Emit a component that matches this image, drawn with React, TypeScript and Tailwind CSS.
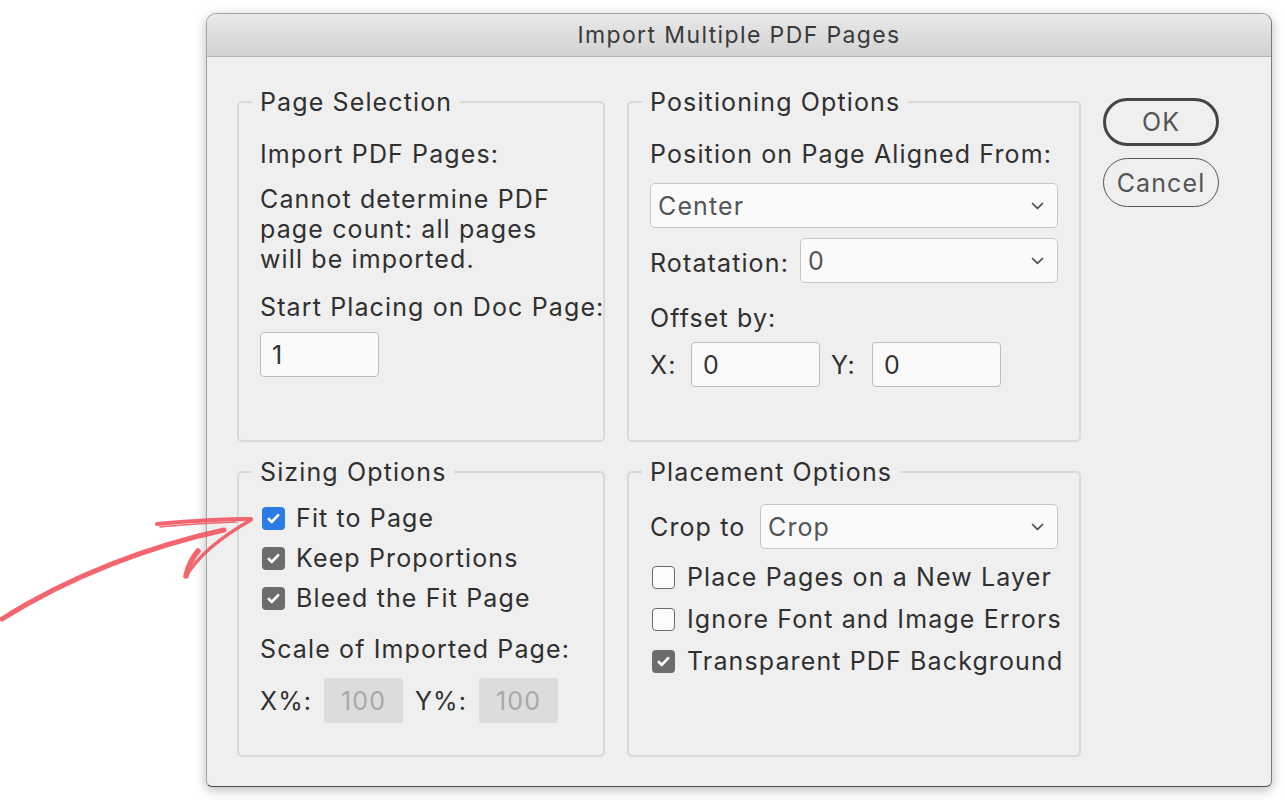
import React from "react";

function Check({ color }: { color: string }) {
  return (
    <span className={`w-[23px] h-[23px] rounded-[4px] flex items-center justify-center shrink-0 ${color}`}>
      <svg width="15" height="15" viewBox="0 0 16 16">
        <path d="M3 8.5l3.2 3.2L13 4.5" fill="none" stroke="white" strokeWidth="2.8" strokeLinecap="round" strokeLinejoin="round" />
      </svg>
    </span>
  );
}

function Empty() {
  return <span className="w-[23px] h-[23px] rounded-[4px] border-[1.5px] border-[#6b6b6b] bg-[#fbfbfb] shrink-0" />;
}

function Chevron() {
  return (
    <svg width="13" height="8" viewBox="0 0 13 8" className="shrink-0">
      <path d="M1.5 1.5L6.5 6.3l5-4.8" fill="none" stroke="#4a4a4a" strokeWidth="1.7" strokeLinecap="round" strokeLinejoin="round" />
    </svg>
  );
}

function Select({ value, cls }: { value: string; cls: string }) {
  return (
    <div className={`flex items-center justify-between h-[45px] bg-[#fafafa] border-[1.5px] border-[#c6c6c6] rounded-[5px] pl-[7px] pr-[13px] text-[#555] ${cls}`}>
      <span>{value}</span>
      <Chevron />
    </div>
  );
}

function Input({ value, cls }: { value: string; cls: string }) {
  return (
    <div className={`flex items-center h-[45px] bg-[#fafafa] border-[1.5px] border-[#bdbdbd] rounded-[4px] pl-[11px] text-[#333] ${cls}`}>
      {value}
    </div>
  );
}

function Disabled({ value }: { value: string }) {
  return (
    <div className="flex items-center justify-center h-[45px] w-[79px] bg-[#dcdcdc] rounded-[3px] text-[#a9a9a9]">
      {value}
    </div>
  );
}

export default function App() {
  return (
    <div className="relative w-[1285px] h-[800px] bg-white pl-[206px] pt-[13px] font-['Inter',sans-serif] text-[25px] tracking-[0.045em] text-[#303030] leading-[30px]">
      <div className="w-[1066px] h-[774px] bg-[#efefef] rounded-t-[10px] rounded-b-[6px] border border-[#a6a6a6] border-b-[#4f4f4f] border-r-[#7a7a7a] shadow-[0_3px_12px_rgba(0,0,0,0.28)] flex flex-col overflow-hidden">
        <div className="h-[43px] shrink-0 bg-gradient-to-b from-[#e9e9e9] to-[#d2d2d2] border-b border-[#b4b4b4] flex items-center justify-center text-[23px] text-[#3a3a3a] tracking-[0.06em]">
          Import Multiple PDF Pages
        </div>
        <div className="flex pl-[30px] pt-[30px]">
          <div className="grid grid-cols-[368px_454px] gap-x-[22px] gap-y-[15px]">
            <fieldset className="min-w-0 w-[368px] h-[355px] border-2 border-[#d9d9d9] rounded-[5px] px-[21px]">
              <legend className="px-2 -ml-2 leading-[30px]">Page Selection</legend>
              <div className="pt-[22px]">Import PDF Pages:</div>
              <div className="mt-[15px]">
                Cannot determine PDF
                <br />
                page count: all pages
                <br />
                will be imported.
              </div>
              <div className="mt-[18px] whitespace-nowrap">Start Placing on Doc Page:</div>
              <Input value="1" cls="mt-[10px] w-[119px]" />
            </fieldset>

            <fieldset className="min-w-0 w-[454px] h-[355px] border-2 border-[#d9d9d9] rounded-[5px] px-[21px]">
              <legend className="px-2 -ml-2 leading-[30px]">Positioning Options</legend>
              <div className="pt-[22px] whitespace-nowrap">Position on Page Aligned From:</div>
              <Select value="Center" cls="mt-[14px] w-full" />
              <div className="mt-[10px] flex items-center justify-between">
                <span className="pt-[4px]">Rotatation:</span>
                <Select value="0" cls="w-[258px]" />
              </div>
              <div className="mt-[20px]">Offset by:</div>
              <div className="mt-[9px] flex items-center">
                <span className="w-[41px]">X:</span>
                <Input value="0" cls="w-[129px]" />
                <span className="ml-[11px] w-[41px]">Y:</span>
                <Input value="0" cls="w-[129px]" />
              </div>
            </fieldset>

            <fieldset className="min-w-0 w-[368px] h-[300px] border-2 border-[#d9d9d9] rounded-[5px] px-[21px]">
              <legend className="px-2 -ml-2 leading-[30px]">Sizing Options</legend>
              <div className="pt-[11px] flex flex-col">
                <div className="h-[40px] flex items-center gap-[11px] pl-[2px]">
                  <Check color="bg-[#2a7be4]" />
                  <span>Fit to Page</span>
                </div>
                <div className="h-[40px] flex items-center gap-[11px] pl-[2px]">
                  <Check color="bg-[#6c6c6c]" />
                  <span>Keep Proportions</span>
                </div>
                <div className="h-[40px] flex items-center gap-[11px] pl-[2px]">
                  <Check color="bg-[#6c6c6c]" />
                  <span>Bleed the Fit Page</span>
                </div>
              </div>
              <div className="mt-[16px] whitespace-nowrap">Scale of Imported Page:</div>
              <div className="mt-[14px] flex items-center">
                <span className="w-[64px]">X%:</span>
                <Disabled value="100" />
                <span className="ml-[12px] w-[64px]">Y%:</span>
                <Disabled value="100" />
              </div>
            </fieldset>

            <fieldset className="min-w-0 w-[454px] h-[300px] border-2 border-[#d9d9d9] rounded-[5px] px-[21px]">
              <legend className="px-2 -ml-2 leading-[30px]">Placement Options</legend>
              <div className="pt-[17px] flex items-center justify-between">
                <span>Crop to</span>
                <Select value="Crop" cls="w-[298px]" />
              </div>
              <div className="mt-[7px] flex flex-col">
                <div className="h-[42px] flex items-center gap-[12px] pl-[2px]">
                  <Empty />
                  <span className="whitespace-nowrap">Place Pages on a New Layer</span>
                </div>
                <div className="h-[42px] flex items-center gap-[12px] pl-[2px]">
                  <Empty />
                  <span className="whitespace-nowrap">Ignore Font and Image Errors</span>
                </div>
                <div className="h-[42px] flex items-center gap-[12px] pl-[2px]">
                  <Check color="bg-[#6c6c6c]" />
                  <span className="whitespace-nowrap">Transparent PDF Background</span>
                </div>
              </div>
            </fieldset>
          </div>

          <div className="ml-[22px] mt-[11px] flex flex-col gap-[12px] w-[116px]">
            <div className="h-[48px] rounded-full border-[3.5px] border-[#454545] flex items-center justify-center text-[#555]">OK</div>
            <div className="h-[49px] rounded-full border-[1.5px] border-[#555] flex items-center justify-center text-[#555]">Cancel</div>
          </div>
        </div>
      </div>

      <svg className="absolute left-0 top-0 pointer-events-none" width="1285" height="800" viewBox="0 0 1285 800">
        <g fill="none" stroke="#f2525c" strokeLinecap="round" strokeLinejoin="round" opacity="0.88">
          <path d="M2 619 C 70 576 150 546 224 530" strokeWidth="5" />
          <path d="M10 612 C 80 574 155 546 214 533" strokeWidth="1.8" />
          <path d="M157 524 C 190 521 225 519 251 519" strokeWidth="4" />
          <path d="M160 527 C 190 524 215 523 236 522" strokeWidth="1.6" />
          <path d="M251 520 C 228 533 200 553 186 576" strokeWidth="3.4" />
          <path d="M186 576 C 188 566 192 558 198 551" strokeWidth="5.5" />
          <path d="M224 530 C 218 531 212 532 207 534" strokeWidth="2" />
        </g>
      </svg>
    </div>
  );
}
